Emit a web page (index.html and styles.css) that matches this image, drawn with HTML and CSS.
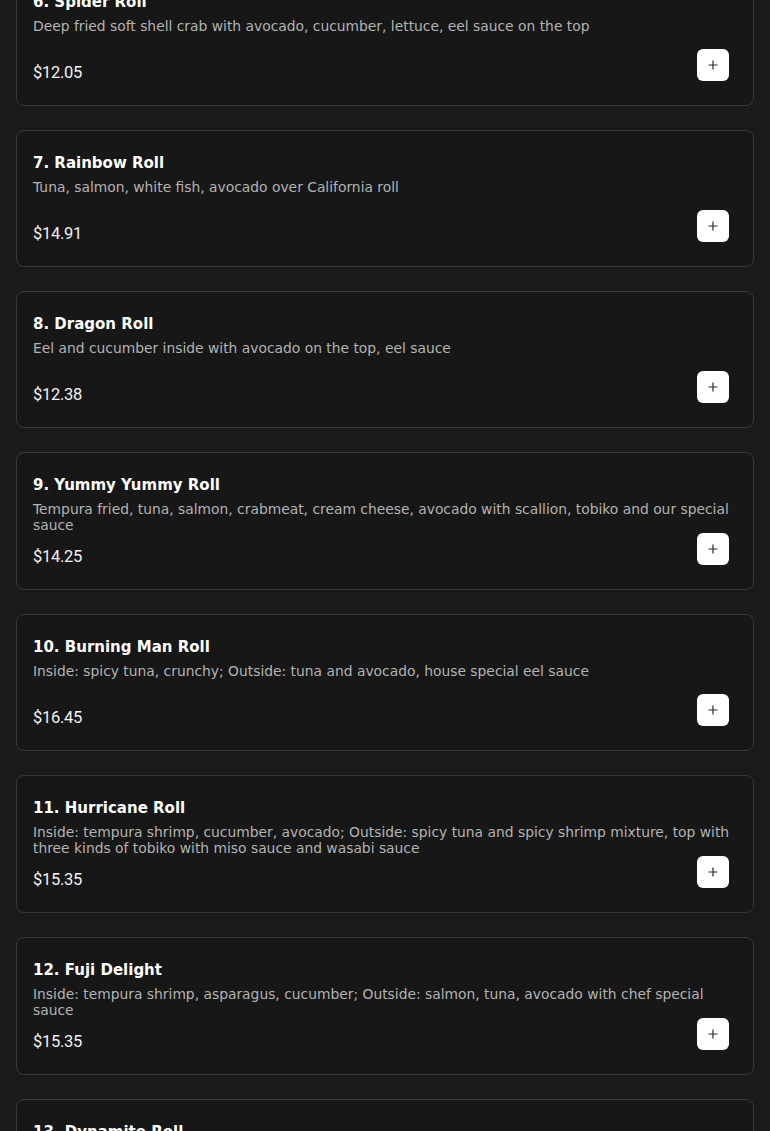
FILE: index.html
```html
<!DOCTYPE html>
<html lang="en">
<head>
<meta charset="utf-8">
<title>Menu</title>
<link rel="stylesheet" href="styles.css">
</head>
<body>
<main class="menu">
  <article class="card">
    <h3 class="title">6. Spider Roll</h3>
    <p class="desc">Deep fried soft shell crab with avocado, cucumber, lettuce, eel sauce on the top</p>
    <div class="row"><span class="price">$12.05</span><button class="add" aria-label="Add"><svg viewBox="0 0 12 12" width="12" height="12"><path d="M6 1.5v9M1.5 6h9" stroke="#2b2b2b" stroke-width="1.2" fill="none"/></svg></button></div>
  </article>
  <article class="card">
    <h3 class="title">7. Rainbow Roll</h3>
    <p class="desc">Tuna, salmon, white fish, avocado over California roll</p>
    <div class="row"><span class="price">$14.91</span><button class="add" aria-label="Add"><svg viewBox="0 0 12 12" width="12" height="12"><path d="M6 1.5v9M1.5 6h9" stroke="#2b2b2b" stroke-width="1.2" fill="none"/></svg></button></div>
  </article>
  <article class="card">
    <h3 class="title">8. Dragon Roll</h3>
    <p class="desc">Eel and cucumber inside with avocado on the top, eel sauce</p>
    <div class="row"><span class="price">$12.38</span><button class="add" aria-label="Add"><svg viewBox="0 0 12 12" width="12" height="12"><path d="M6 1.5v9M1.5 6h9" stroke="#2b2b2b" stroke-width="1.2" fill="none"/></svg></button></div>
  </article>
  <article class="card">
    <h3 class="title">9. Yummy Yummy Roll</h3>
    <p class="desc">Tempura fried, tuna, salmon, crabmeat, cream cheese, avocado with scallion, tobiko and our special sauce</p>
    <div class="row"><span class="price">$14.25</span><button class="add" aria-label="Add"><svg viewBox="0 0 12 12" width="12" height="12"><path d="M6 1.5v9M1.5 6h9" stroke="#2b2b2b" stroke-width="1.2" fill="none"/></svg></button></div>
  </article>
  <article class="card">
    <h3 class="title">10. Burning Man Roll</h3>
    <p class="desc">Inside: spicy tuna, crunchy; Outside: tuna and avocado, house special eel sauce</p>
    <div class="row"><span class="price">$16.45</span><button class="add" aria-label="Add"><svg viewBox="0 0 12 12" width="12" height="12"><path d="M6 1.5v9M1.5 6h9" stroke="#2b2b2b" stroke-width="1.2" fill="none"/></svg></button></div>
  </article>
  <article class="card">
    <h3 class="title">11. Hurricane Roll</h3>
    <p class="desc">Inside: tempura shrimp, cucumber, avocado; Outside: spicy tuna and spicy shrimp mixture, top with three kinds of tobiko with miso sauce and wasabi sauce</p>
    <div class="row"><span class="price">$15.35</span><button class="add" aria-label="Add"><svg viewBox="0 0 12 12" width="12" height="12"><path d="M6 1.5v9M1.5 6h9" stroke="#2b2b2b" stroke-width="1.2" fill="none"/></svg></button></div>
  </article>
  <article class="card">
    <h3 class="title">12. Fuji Delight</h3>
    <p class="desc">Inside: tempura shrimp, asparagus, cucumber; Outside: salmon, tuna, avocado with chef special sauce</p>
    <div class="row"><span class="price">$15.35</span><button class="add" aria-label="Add"><svg viewBox="0 0 12 12" width="12" height="12"><path d="M6 1.5v9M1.5 6h9" stroke="#2b2b2b" stroke-width="1.2" fill="none"/></svg></button></div>
  </article>
  <article class="card">
    <h3 class="title">13. Dynamite Roll</h3>
    <p class="desc">Crabmeat, cucumber, avocado topped with baked spicy seafood</p>
    <div class="row"><span class="price">$13.95</span><button class="add" aria-label="Add"><svg viewBox="0 0 12 12" width="12" height="12"><path d="M6 1.5v9M1.5 6h9" stroke="#2b2b2b" stroke-width="1.2" fill="none"/></svg></button></div>
  </article>
</main>
</body>
</html>
```

FILE: styles.css
```css
* { box-sizing: border-box; }
html, body { margin: 0; padding: 0; }
body {
  background: #1a1a1a;
  font-family: "DejaVu Sans", "Noto Sans", sans-serif;
  color: #fff;
}
.menu {
  display: flex;
  flex-direction: column;
  gap: 24px;
  padding: 0 16px;
  margin-top: -31px;
}
.card {
  background: #171717;
  border: 1px solid #383838;
  border-radius: 8px;
  padding: 20px 16px 24px 16px;
}
.title {
  margin: 0;
  font-size: 15px;
  line-height: 24px;
  font-weight: 700;
  color: #ffffff;
}
.desc {
  margin: 4px 0 0;
  min-height: 31px;
  font-size: 13.85px;
  line-height: 16px;
  color: #b3b3b3;
}
.row {
  height: 32px;
  display: flex;
  align-items: flex-end;
  justify-content: space-between;
}
.price {
  font-family: Roboto, "DejaVu Sans", sans-serif;
  font-size: 16.5px;
  letter-spacing: -0.3px;
  line-height: 20px;
  margin-bottom: -2px;
  color: #f2f2f2;
}
.add {
  width: 32px;
  height: 32px;
  margin-right: 8px;
  border: 0;
  border-radius: 6px;
  background: #ffffff;
  padding: 0;
  display: flex;
  align-items: center;
  justify-content: center;
  cursor: pointer;
}
```
